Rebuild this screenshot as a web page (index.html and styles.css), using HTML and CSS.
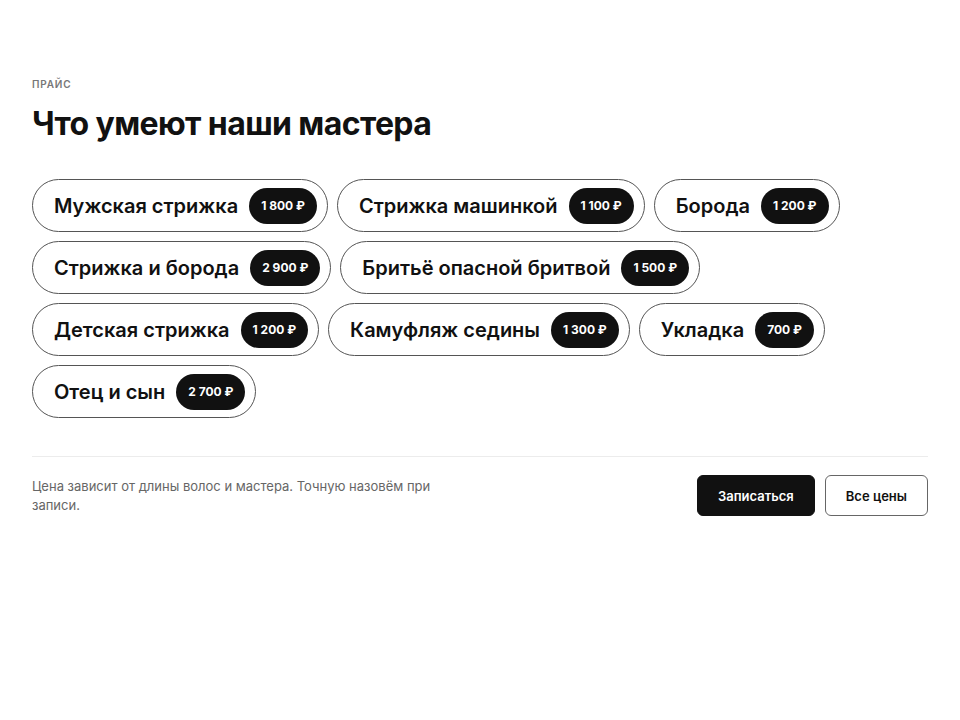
FILE: index.html
```html
<!doctype html>
<html lang="ru">
<head>
  <meta charset="utf-8">
  <title>Прайс</title>
  <link rel="stylesheet" href="styles.css">
</head>
<body>
  <section class="price">
    <p class="eyebrow">Прайс</p>
    <h2 class="title">Что умеют наши мастера</h2>

    <div class="chips">
      <div class="chip">Мужская стрижка <span class="tag">1 800 ₽</span></div>
      <div class="chip">Стрижка машинкой <span class="tag">1 100 ₽</span></div>
      <div class="chip">Борода <span class="tag">1 200 ₽</span></div>
      <div class="chip">Стрижка и борода <span class="tag">2 900 ₽</span></div>
      <div class="chip">Бритьё опасной бритвой <span class="tag">1 500 ₽</span></div>
      <div class="chip">Детская стрижка <span class="tag">1 200 ₽</span></div>
      <div class="chip">Камуфляж седины <span class="tag">1 300 ₽</span></div>
      <div class="chip">Укладка <span class="tag">700 ₽</span></div>
      <div class="chip">Отец и сын <span class="tag">2 700 ₽</span></div>
    </div>

    <div class="footer">
      <p class="note">Цена зависит от длины волос и мастера. Точную назовём при записи.</p>
      <div class="actions">
        <button class="btn btn-dark">Записаться</button>
        <button class="btn btn-light">Все цены</button>
      </div>
    </div>
  </section>
</body>
</html>
```

FILE: styles.css
```css
body{
  margin:0;
  background:#fff;
  color:#111;
  font-family:Inter, "Noto Sans", sans-serif;
}
.price{
  padding:78px 32px 0;
}
.eyebrow{
  margin:0;
  font-size:10px;
  font-weight:600;
  letter-spacing:0.8px;
  text-transform:uppercase;
  color:#777;
}
.title{
  margin:14px 0 0;
  font-size:32px;
  line-height:40px;
  font-weight:700;
  letter-spacing:-0.6px;
}
.chips{
  display:flex;
  flex-wrap:wrap;
  gap:9px 9px;
  margin-top:35px;
}
.chip{
  display:flex;
  align-items:center;
  gap:11px;
  height:53px;
  box-sizing:border-box;
  padding:0 10px 0 21px;
  border:1px solid #555;
  border-radius:27px;
  font-size:20px;
  font-weight:600;
  letter-spacing:0;
}
.tag{
  display:inline-flex;
  align-items:center;
  height:36px;
  padding:0 12px;
  border-radius:18px;
  background:#111;
  color:#fff;
  font-size:12px;
  font-weight:700;
}
.footer{
  display:flex;
  align-items:center;
  justify-content:space-between;
  margin-top:38px;
  padding-top:18px;
  border-top:1px solid #ececec;
}
.note{
  margin:0;
  max-width:400px;
  font-size:13px;
  line-height:19px;
  color:#666;
}
.actions{
  display:flex;
  gap:10px;
}
.btn{
  height:41px;
  padding:0 20px;
  border-radius:6px;
  font-family:inherit;
  font-size:13px;
  font-weight:600;
  cursor:pointer;
}
.btn-dark{
  background:#111;
  color:#fff;
  border:1px solid #111;
}
.btn-light{
  background:#fff;
  color:#111;
  border:1px solid #666;
}
```
